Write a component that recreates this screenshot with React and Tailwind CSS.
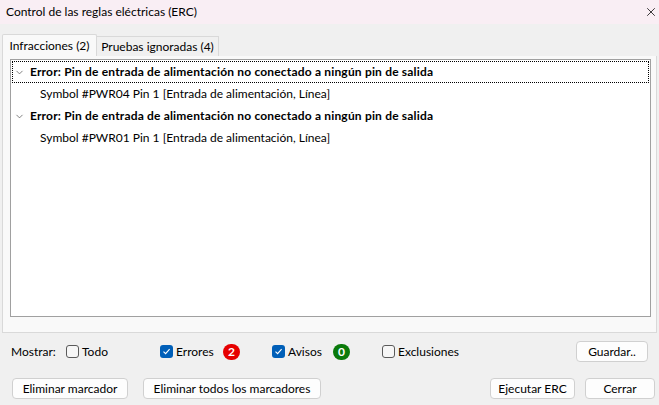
import { ChevronDown, X } from "lucide-react";

const rows = [
  {
    title: "Error: Pin de entrada de alimentación no conectado a ningún pin de salida",
    detail: "Symbol #PWR04 Pin 1 [Entrada de alimentación, Línea]",
    focused: true,
  },
  {
    title: "Error: Pin de entrada de alimentación no conectado a ningún pin de salida",
    detail: "Symbol #PWR01 Pin 1 [Entrada de alimentación, Línea]",
  },
];

const CheckBox = ({ checked, label, className = "" }) => (
  <label className={`flex items-center gap-[3px] ${className}`}>
    {checked ? (
      <span className="flex h-[13px] w-[13px] items-center justify-center rounded-[3px] bg-[#005fb8]">
        <svg width="9" height="9" viewBox="0 0 9 9" fill="none">
          <path d="M1.5 4.7 L3.6 6.7 L7.6 2.2" stroke="white" strokeWidth="1.1" />
        </svg>
      </span>
    ) : (
      <span className="h-[13px] w-[13px] rounded-[3px] border border-[#5a5a5a] bg-[#f6f6f6]" />
    )}
    <span>{label}</span>
  </label>
);

const Badge = ({ value, color }) => (
  <span
    className={`flex h-[16px] w-[17px] items-center justify-center rounded-full text-[12px] font-bold leading-none text-white ${color}`}
  >
    {value}
  </span>
);

const Button = ({ children, className = "" }) => (
  <button
    className={`flex h-[21px] items-center justify-center whitespace-nowrap rounded-[4px] border border-[#d0d0d0] bg-[#fdfdfd] text-[12px] text-black ${className}`}
  >
    {children}
  </button>
);

export default function App() {
  return (
    <div
      className="flex h-[405px] w-[659px] flex-col bg-[#f0f0f0] text-[12px] text-black"
      style={{ fontFamily: 'Lato, "Noto Sans", sans-serif' }}
    >
      {/* Title bar */}
      <div className="flex h-[24px] items-center justify-between bg-[#f9eef4] pl-[6px] pr-[1px]">
        <span className="text-[12px]">Control de las reglas eléctricas (ERC)</span>
        <X size={14} strokeWidth={1.3} className="text-black" />
      </div>

      {/* Tabs */}
      <div className="mt-[10px] flex items-end whitespace-nowrap pl-[2px]">
        <div className="flex h-[22px] w-[95px] items-center justify-center rounded-t-[2px] border border-b-0 border-[#d9d9d9] bg-[#f9f9f9]">
          Infracciones (2)
        </div>
        <div className="flex h-[20px] w-[122px] items-center justify-center border border-b-0 border-l-0 border-[#d9d9d9] bg-[#f0f0f0]">
          Pruebas ignoradas (4)
        </div>
      </div>

      {/* Tab panel */}
      <div className="mx-[2px] flex h-[277px] flex-col border border-t-0 border-[#d9d9d9] bg-[#f9f9f9] pl-[7px] pr-[5px] pt-[3px] pb-[15px]">
        <div className="flex flex-1 flex-col border border-[#a0a0a0] bg-white pt-[1px]">
          {rows.map((row, i) => (
            <div key={i} className="flex flex-col">
              <div
                className={`mx-[1px] flex h-[22px] items-center gap-[5px] pl-[1px] font-bold tracking-[0.18px] ${
                  row.focused ? "border border-dotted border-black" : "border border-transparent"
                }`}
              >
                <ChevronDown size={11} strokeWidth={1.6} className="text-[#555]" />
                <span>{row.title}</span>
              </div>
              <div className="flex h-[22px] items-center pl-[29px]">{row.detail}</div>
            </div>
          ))}
        </div>
      </div>

      {/* Filter row */}
      <div className="mt-[8px] flex h-[21px] items-center pl-[11px] pr-[11px]">
        <span className="w-[55px]">Mostrar:</span>
        <CheckBox label="Todo" className="w-[94px]" />
        <CheckBox checked label="Errores" className="w-[63px]" />
        <Badge value="2" color="bg-[#e60000]" />
        <CheckBox checked label="Avisos" className="ml-[32px] w-[61px]" />
        <Badge value="0" color="bg-[#0a7a0a]" />
        <CheckBox label="Exclusiones" className="ml-[32px]" />
        <Button className="ml-auto w-[72px]">Guardar..</Button>
      </div>

      {/* Button row */}
      <div className="mt-[16px] flex items-center pl-[12px] pr-[4px]">
        <Button className="w-[116px]">Eliminar marcador</Button>
        <Button className="ml-[15px] w-[178px]">Eliminar todos los marcadores</Button>
        <Button className="ml-auto w-[85px] border-[#005fb8]">Ejecutar ERC</Button>
        <Button className="ml-[10px] w-[70px]">Cerrar</Button>
      </div>
    </div>
  );
}
